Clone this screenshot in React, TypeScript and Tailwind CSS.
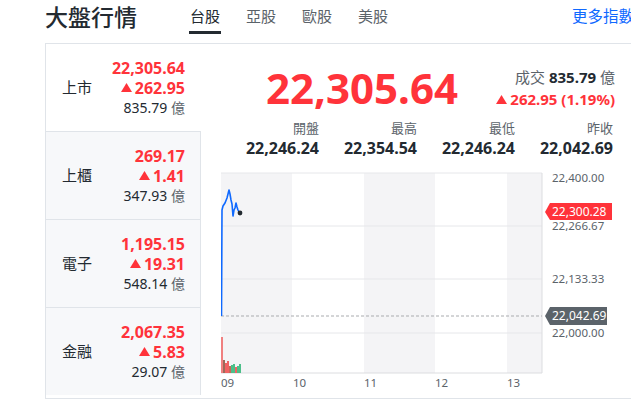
const RED = 'text-[#ff333a]'

type Row = { name: string; price: string; change: string; vol: string }

const rows: Row[] = [
  { name: '上市', price: '22,305.64', change: '262.95', vol: '835.79' },
  { name: '上櫃', price: '269.17', change: '1.41', vol: '347.93' },
  { name: '電子', price: '1,195.15', change: '19.31', vol: '548.14' },
  { name: '金融', price: '2,067.35', change: '5.83', vol: '29.07' },
]

const stats = [
  { label: '開盤', value: '22,246.24' },
  { label: '最高', value: '22,354.54' },
  { label: '最低', value: '22,246.24' },
  { label: '昨收', value: '22,042.69' },
]

function Up({ className = '' }: { className?: string }) {
  return (
    <svg width="11" height="9" viewBox="0 0 11 9" className={className}>
      <path d="M5.5 0 L11 9 L0 9 Z" fill="#ff333a" />
    </svg>
  )
}

function Chart() {
  const line =
    'M0.5 146 L1 40 L2 36 L4 33 L6 28 L8 20 L9 24 L10 30 L11 34 L12 46 L13 40 L14 38 L15 33 L16 37 L17 40 L18 42'
  const bars = [
    { x: 0, h: 36, c: '#f08080' },
    { x: 2, h: 13, c: '#9c6b5a' },
    { x: 4, h: 10, c: '#f06262' },
    { x: 6, h: 12, c: '#f06262' },
    { x: 8, h: 7, c: '#c46a5a' },
    { x: 10, h: 8, c: '#4cbf8a' },
    { x: 12, h: 9, c: '#4cbf8a' },
    { x: 14, h: 6, c: '#f06262' },
    { x: 16, h: 7, c: '#4cbf8a' },
    { x: 18, h: 9, c: '#4cbf8a' },
  ]
  return (
    <svg width="400" height="222" viewBox="0 0 400 222" className="block">
      <rect x="0" y="3" width="71" height="200" fill="#f4f4f6" />
      <rect x="143" y="3" width="71" height="200" fill="#f4f4f6" />
      <rect x="286" y="3" width="35" height="200" fill="#f4f4f6" />
      {[3, 56, 109, 163].map((y) => (
        <line key={y} x1="0" x2="321" y1={y} y2={y} stroke="#e6e7ea" strokeWidth="1" />
      ))}
      <line x1="321" x2="321" y1="3" y2="203" stroke="#dcdde0" />
      <line x1="0" x2="321" y1="203" y2="203" stroke="#dcdde0" />
      <line x1="0" x2="321" y1="146" y2="146" stroke="#a9abae" strokeDasharray="3 2" />
      {bars.map((b) => (
        <rect key={b.x} x={b.x} y={203 - b.h} width="2" height={b.h} fill={b.c} />
      ))}
      <path d={line} fill="none" stroke="#0f69ff" strokeWidth="1.6" strokeLinejoin="round" />
      <circle cx="19" cy="43" r="2.4" fill="#232a31" />
      <g fontSize="11.5" fill="#5b636a" fontFamily="Noto Sans, Noto Sans CJK TC, sans-serif">
        <text x="331" y="12">22,400.00</text>
        <text x="331" y="60">22,266.67</text>
        <text x="331" y="113">22,133.33</text>
        <text x="331" y="167">22,000.00</text>
        <text x="0" y="217">09</text>
        <text x="72" y="217">10</text>
        <text x="143" y="217">11</text>
        <text x="214" y="217">12</text>
        <text x="286" y="217">13</text>
      </g>
      <path d="M324 42 L329 33 L391 33 L391 50 L329 50 Z" fill="#ff333a" />
      <text x="331" y="46" fontSize="12" fill="#fff" fontFamily="Noto Sans, sans-serif">
        22,300.28
      </text>
      <path d="M324 146 L329 137 L386 137 L386 155 L329 155 Z" fill="#5b636a" />
      <text x="331" y="150" fontSize="12" fill="#fff" fontFamily="Noto Sans, sans-serif">
        22,042.69
      </text>
    </svg>
  )
}

export default function App() {
  return (
    <div className="w-[631px] h-[420px] overflow-hidden bg-white text-[#232a31] font-['Noto_Sans','Noto_Sans_CJK_TC',sans-serif]">
      <div className="w-[760px] pl-[45px]">
        <div className="flex items-start h-[43px]">
          <h1 className="text-[23px] leading-[32px] font-medium mt-[1px] w-[145px]">大盤行情</h1>
          <nav className="flex gap-[26px] text-[15px] leading-[22px] mt-[5px]">
            <div className="relative text-[#232a31]">
              台股
              <span className="absolute left-[-1px] right-[-1px] top-[26px] h-[3px] bg-[#232a31]" />
            </div>
            <div className="text-[#5b636a]">亞股</div>
            <div className="text-[#5b636a]">歐股</div>
            <div className="text-[#5b636a]">美股</div>
          </nav>
          <a className="ml-[184px] mt-[5px] text-[15.5px] leading-[22px] text-[#0f69ff]">更多指數</a>
        </div>

        <div className="flex border-t border-l border-b border-[#e0e4e9] h-[356px]">
          <div className="w-[155px] flex flex-col">
            {rows.map((r, i) => (
              <div
                key={r.name}
                className={
                  i === 0
                    ? 'h-[87px] flex items-center justify-between pl-[16px] pr-[16px] bg-white'
                    : 'h-[88px] flex items-center justify-between pl-[16px] pr-[15px] bg-[#f7f8fa] border-t border-r border-[#e0e4e9]'
                }
              >
                <span className="text-[15px]">{r.name}</span>
                <div className="flex flex-col items-end">
                  <span className={`${RED} text-[16px] leading-[20px] font-bold`}>{r.price}</span>
                  <span className={`${RED} text-[16px] leading-[20px] font-bold flex items-center gap-[3px]`}>
                    <Up />
                    {r.change}
                  </span>
                  <span className="text-[14px] leading-[20px]">
                    {r.vol} <span className="text-[#5b636a]">億</span>
                  </span>
                </div>
              </div>
            ))}
          </div>

          <div className="flex-1 pl-[20px]">
            <div className="w-[394px] flex justify-between items-center mt-[21px]">
              <span className={`${RED} text-[42px] leading-[46px] font-bold ml-[45px]`}>22,305.64</span>
              <div className="flex flex-col items-end">
                <span className="text-[15px] leading-[22px]">
                  <span className="text-[#5b636a]">成交</span> <span className="font-bold">835.79</span>{' '}
                  <span className="text-[#5b636a]">億</span>
                </span>
                <span className={`${RED} text-[15px] leading-[22px] font-bold flex items-center gap-[3px]`}>
                  <Up />
                  262.95 (1.19%)
                </span>
              </div>
            </div>
            <div className="grid grid-cols-4 w-[392px] mt-[7px]">
              {stats.map((s) => (
                <div key={s.label} className="flex flex-col items-end">
                  <span className="text-[13px] leading-[20px] text-[#5b636a]">{s.label}</span>
                  <span className="text-[16px] leading-[20px] font-bold">{s.value}</span>
                </div>
              ))}
            </div>
            <div className="mt-[12px]">
              <Chart />
            </div>
          </div>
        </div>
      </div>
    </div>
  )
}
